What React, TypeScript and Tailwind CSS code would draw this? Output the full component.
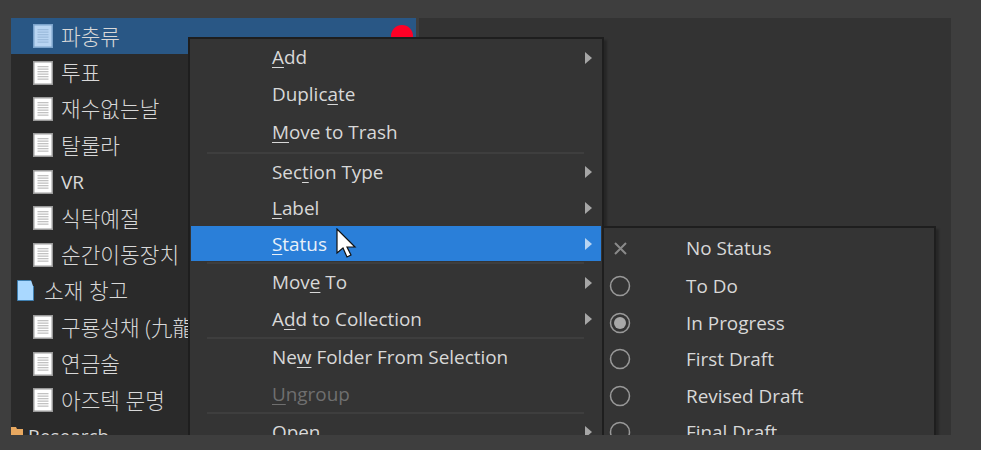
import React from "react";

function Doc({ selected }: { selected?: boolean }) {
  return (
    <svg width="20" height="24" viewBox="0 0 20 24" className="shrink-0">
      <rect x="0" y="0" width="20" height="24" fill={selected ? "#7ba3cb" : "#9a9a9a"} />
      <rect x="1.5" y="1.5" width="17" height="21" fill={selected ? "#b9d5f2" : "#ffffff"} />
      {[5, 7.5, 10, 12.5, 15, 17.5].map((y) => (
        <rect key={y} x="4.5" y={y} width="11" height="1.3" fill={selected ? "#9dbcdc" : "#c2c2c2"} />
      ))}
    </svg>
  );
}

function Arrow({ color = "#a6a6a6" }: { color?: string }) {
  return (
    <svg width="7" height="12" viewBox="0 0 7 12" className="shrink-0">
      <path d="M0 0 L7 6 L0 12 Z" fill={color} />
    </svg>
  );
}

function Row({ name, selected, latin }: { name: string; selected?: boolean; latin?: boolean }) {
  return (
    <div className={`flex h-[36.4px] items-center pl-[22px] ${selected ? "bg-[#295785]" : ""}`}>
      <Doc selected={selected} />
      <span className={`ml-[8px] whitespace-nowrap pt-px text-[#d8d8d8] ${latin ? "text-[19px]" : "text-[21.4px] font-light"}`}>{name}</span>
    </div>
  );
}

type Item = { l: React.ReactNode; h: string; arrow?: boolean; active?: boolean; off?: boolean; sep?: string; pad?: string };

const items: Item[] = [
  { l: <><u>A</u>dd</>, h: "h-[37px]", arrow: true },
  { l: <>Duplic<u>a</u>te</>, h: "h-[37px]" },
  { l: <><u>M</u>ove to Trash</>, h: "h-[38px]", sep: "h-[3px]" },
  { l: <>Sec<u>t</u>ion Type</>, h: "h-[36px]", arrow: true },
  { l: <><u>L</u>abel</>, h: "h-[36px]", arrow: true },
  { l: <><u>S</u>tatus</>, h: "h-[35px]", arrow: true, active: true, sep: "h-[3px]", pad: "pt-[2px]" },
  { l: <>Mov<u>e</u> To</>, h: "h-[37px]", arrow: true },
  { l: <>A<u>d</u>d to Collection</>, h: "h-[36px]", arrow: true, sep: "h-[2px]" },
  { l: <>Ne<u>w</u> Folder From Selection</>, h: "h-[36px]" },
  { l: <><u>U</u>ngroup</>, h: "h-[37px]", off: true, sep: "h-[2px]", pad: "pt-[2px]" },
  { l: <>Open</>, h: "h-[36px]", arrow: true },
];

const statuses = ["To Do", "In Progress", "First Draft", "Revised Draft", "Final Draft"];

export default function App() {
  return (
    <div className="h-[450px] w-[981px] overflow-hidden bg-[#3e3e3e] pl-[11px] pt-[18px] font-['Open_Sans','Noto_Sans_CJK_KR',sans-serif]">
      <div className="relative flex h-[417px] w-[940px] overflow-hidden bg-[#333333]">
        <div className="relative h-full w-[408px] shrink-0 border-r-[3px] border-[#3e3e3e] bg-[#2a2a2a]">
          <Row name="파충류" selected />
          <Row name="투표" />
          <Row name="재수없는날" />
          <Row name="탈룰라" />
          <Row name="VR" latin />
          <Row name="식탁예절" />
          <Row name="순간이동장치" />
          <div className="flex h-[36.4px] items-center pl-[6px]">
            <svg width="18" height="21" viewBox="0 0 18 21" className="shrink-0">
              <path d="M0.5 0.5 H16.5 V20.5 H0.5 Z" fill="#a9d8ff" stroke="#3f7fb0" />
              <path d="M14 0 L18 0 L18 6 L16 6 Z" fill="#2a2a2a" />
            </svg>
            <span className="ml-[9px] whitespace-nowrap pt-px text-[21.4px] font-light text-[#d8d8d8]">소재 창고</span>
          </div>
          <Row name="구룡성채 (九龍城寨)" />
          <Row name="연금술" />
          <Row name="아즈텍 문명" />
          <div className="flex h-[36.4px] items-center">
            <svg width="12" height="14" viewBox="0 0 12 14" className="-mt-[6px] shrink-0">
              <path d="M0 1 H5 L6 3 H12 V14 H0 Z" fill="#e8a860" />
            </svg>
            <span className="ml-[5px] whitespace-nowrap text-[19px] text-[#d8d8d8]">Research</span>
          </div>
          <div className="absolute left-[380px] top-[7px] h-[22px] w-[22px] rounded-full bg-[#ff0026]" />
        </div>

        <div className="absolute left-[177px] top-[19px] w-[416px] border-2 border-[#1e1e1e] bg-[#343434] shadow-[3px_3px_2px_rgba(0,0,0,0.25)]">
          {items.map((it, i) => (
            <div key={i}>
              <div className={`mx-px flex ${it.h} items-center pl-[81px] pr-[9px] text-[18.9px] [&_u]:underline-offset-[3px] ${it.active ? "bg-[#2a7fd9] text-[#e8f0f8]" : it.off ? "text-[#6f6f6f]" : "text-[#d8d8d8]"}`}>
                <span className={`flex-1 whitespace-nowrap ${it.pad ?? ""}`}>{it.l}</span>
                {it.arrow && <Arrow color={it.active ? "#b9d5f2" : "#a6a6a6"} />}
              </div>
              {it.sep && (
                <div className={`${it.sep} flex items-center`}>
                  <div className="ml-[17px] mr-[18px] h-[2px] flex-1 bg-[#3e3e3e]" />
                </div>
              )}
            </div>
          ))}
        </div>

        <div className="absolute left-[591px] top-[208px] w-[334px] border-2 border-[#1e1e1e] bg-[#343434] shadow-[3px_3px_2px_rgba(0,0,0,0.25)]">
          <div className="flex h-[40px] items-center text-[18.9px] text-[#d8d8d8]">
            <span className="flex w-[32px] justify-center">
              <svg width="13" height="13" viewBox="0 0 13 13"><path d="M1 1 L12 12 M12 1 L1 12" stroke="#8a8a8a" strokeWidth="2" /></svg>
            </span>
            <span className="ml-[50px]">No Status</span>
          </div>
          {statuses.map((s, i) => (
            <div key={s} className="flex h-[36.5px] items-center text-[18.9px] text-[#d8d8d8]">
              <span className="flex w-[32px] justify-center">
                <svg width="22" height="22" viewBox="0 0 22 22">
                  <circle cx="11" cy="11" r="9.5" fill="none" stroke="#999999" strokeWidth="1.5" />
                  {i === 1 && <circle cx="11" cy="11" r="6" fill="#a8a8a8" />}
                </svg>
              </span>
              <span className="ml-[50px]">{s}</span>
            </div>
          ))}
        </div>

        <svg width="24" height="34" viewBox="0 0 24 34" className="absolute left-[325px] top-[210px]">
          <path d="M1 1 L1 25 L7 20 L11 29 L15 27 L11 19 L19 19 Z" fill="#ffffff" stroke="#111111" strokeWidth="1.2" />
        </svg>
      </div>
    </div>
  );
}
